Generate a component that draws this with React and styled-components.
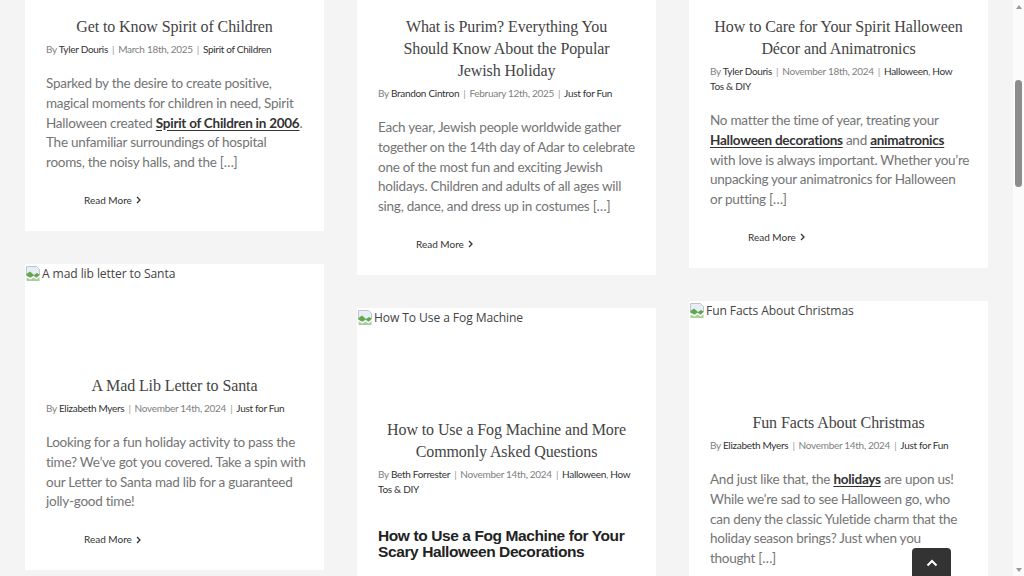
import styled, { createGlobalStyle } from "styled-components";
import { Fragment } from "react";

const GlobalStyle = createGlobalStyle`
  html, body {
    margin: 0;
    padding: 0;
    background: #f4f4f4;
    overflow: hidden;
  }
  body {
    font-family: "Lato", "Liberation Sans", sans-serif;
  }
`;

const Page = styled.div`
  display: flex;
  width: 1024px;
  height: 576px;
  overflow: hidden;
  background: #f4f4f4;
`;

const Main = styled.main`
  flex: 1;
  min-width: 0;
  overflow: hidden;
`;

/* the page is scrolled down a little: the top row of images sits above the fold */
const Masonry = styled.div`
  display: grid;
  grid-template-columns: repeat(3, minmax(0, 1fr));
  column-gap: 33px;
  align-items: start;
  padding: 0 25px;
  margin-top: -95px;
`;

const Column = styled.div`
  display: flex;
  flex-direction: column;
  gap: 33px;
  min-width: 0;
`;

const Card = styled.article`
  background: #fff;
  padding-bottom: 23px;
`;

const ImageSlot = styled.div`
  height: 90px;
  display: flex;
  align-items: flex-start;
  padding-top: 1px;
  font-family: "Open Sans", "Liberation Sans", sans-serif;
  font-size: 12.1px;
  line-height: 18px;
  color: #444;
  letter-spacing: -0.1px;
`;

const Content = styled.div`
  padding: 0 21px;
`;

const Title = styled.h2`
  margin: 20px 0 0;
  font-family: "Liberation Serif", "DejaVu Serif", serif;
  font-weight: 400;
  font-size: 16px;
  line-height: 22px;
  letter-spacing: -0.1px;
  color: #444;
  text-align: center;
`;

const Meta = styled.p`
  margin: 4px 0 0;
  font-size: 10px;
  line-height: 15px;
  letter-spacing: -0.3px;
  color: #808080;

  a {
    color: #333;
    text-decoration: none;
  }
`;

const Sep = styled.span`
  margin: 0 4px;
  color: #999;
`;

const Excerpt = styled.div`
  margin-top: 17px;
  font-size: 13.5px;
  line-height: 19.8px;
  letter-spacing: -0.25px;
  color: #747474;

  a {
    color: #333;
    font-weight: 700;
    text-decoration: underline;
    text-underline-offset: 2px;
  }
`;

/* lines are kept as the source site broke them */
const Line = styled.span`
  display: block;
  white-space: nowrap;
`;

const ExcerptHeading = styled.h3`
  margin: 31px 0 0;
  font-family: "Liberation Sans", Arial, sans-serif;
  font-weight: 700;
  font-size: 15.5px;
  line-height: 16px;
  letter-spacing: -0.4px;
  color: #222;
`;

const ReadMore = styled.a`
  display: inline-flex;
  align-items: center;
  gap: 4px;
  margin: 20px 0 0 38px;
  font-size: 10px;
  line-height: 15px;
  color: #333;
  text-decoration: none;
`;

const Scrollbar = styled.div`
  width: 11px;
  flex: none;
  background: #fbfbfb;
  display: flex;
  flex-direction: column;
  align-items: center;
  padding: 5px 0 4px;
  box-sizing: border-box;
`;

const Arrow = styled.div`
  width: 0;
  height: 0;
  border-left: 3.5px solid transparent;
  border-right: 3.5px solid transparent;
  ${({ $down }) =>
    $down
      ? "border-top: 4px solid #9a9a9a; margin-top: auto;"
      : "border-bottom: 4px solid #9a9a9a;"}
`;

const Thumb = styled.div`
  width: 7px;
  height: 107px;
  margin-top: 71px;
  border-radius: 4px;
  background: #8c8c8c;
`;

const ToTop = styled.a`
  position: fixed;
  left: 912px;
  bottom: -8px;
  width: 39px;
  height: 36px;
  background: #333;
  border-radius: 4px 4px 0 0;
  display: flex;
  justify-content: center;
  padding-top: 11px;
  box-sizing: border-box;
`;

function BrokenImage({ alt }) {
  return (
    <>
      <svg width="17" height="16" viewBox="0 0 17 16" style={{ flex: "none" }}>
        <path d="M1.5 1.5h10l3 3v5.5l-3 2.5-3-2-3 2-4-2z" fill="#e8eef5" stroke="#b7bec6" strokeWidth="0.9" />
        <path d="M1.5 9l3.5-2.5 4 3.5 3-2 2.5 1.5v0.5l-3 2.5-3-2-3 2-4-2z" fill="#62a848" />
        <path d="M1.5 12.5l4 2 3-2 3 2 3-2.5v4H1.5z" fill="#62a848" opacity="0.55" />
      </svg>
      <span>{alt}</span>
    </>
  );
}

function Chevron() {
  return (
    <svg width="5" height="8" viewBox="0 0 5 8">
      <path d="M1 1l3 3-3 3" fill="none" stroke="#333" strokeWidth="1.3" />
    </svg>
  );
}

function PostCard({ post }) {
  return (
    <Card>
      <ImageSlot>
        <BrokenImage alt={post.alt} />
      </ImageSlot>
      <Content>
        <Title>
          {post.title.map((t, i) => (
            <Fragment key={i}>
              {i > 0 && <br />}
              {t}
            </Fragment>
          ))}
        </Title>
        <Meta>
          By <a href="#">{post.author}</a>
          <Sep>|</Sep>
          {post.date}
          <Sep>|</Sep>
          {post.cats.map((c, i) => (
            <span key={c}>
              {i > 0 && ", "}
              <a href="#">{c}</a>
            </span>
          ))}
        </Meta>
        {post.lines && (
          <Excerpt>
            {post.lines.map((l, i) => (
              <Line key={i}>{l}</Line>
            ))}
          </Excerpt>
        )}
        {post.heading && <ExcerptHeading>{post.heading}</ExcerptHeading>}
        {!post.heading && (
          <ReadMore href="#">
            Read More <Chevron />
          </ReadMore>
        )}
      </Content>
    </Card>
  );
}

const columns = [
  [
    {
      alt: "Spirit of Children",
      title: ["Get to Know Spirit of Children"],
      author: "Tyler Douris",
      date: "March 18th, 2025",
      cats: ["Spirit of Children"],
      lines: [
        "Sparked by the desire to create positive,",
        "magical moments for children in need, Spirit",
        <>
          Halloween created <a href="#">Spirit of Children in 2006</a>.
        </>,
        "The unfamiliar surroundings of hospital",
        "rooms, the noisy halls, and the […]",
      ],
    },
    {
      alt: "A mad lib letter to Santa",
      title: ["A Mad Lib Letter to Santa"],
      author: "Elizabeth Myers",
      date: "November 14th, 2024",
      cats: ["Just for Fun"],
      lines: [
        "Looking for a fun holiday activity to pass the",
        "time? We’ve got you covered. Take a spin with",
        "our Letter to Santa mad lib for a guaranteed",
        "jolly-good time!",
      ],
    },
  ],
  [
    {
      alt: "Purim",
      title: ["What is Purim? Everything You", "Should Know About the Popular", "Jewish Holiday"],
      author: "Brandon Cintron",
      date: "February 12th, 2025",
      cats: ["Just for Fun"],
      lines: [
        "Each year, Jewish people worldwide gather",
        "together on the 14th day of Adar to celebrate",
        "one of the most fun and exciting Jewish",
        "holidays. Children and adults of all ages will",
        "sing, dance, and dress up in costumes […]",
      ],
    },
    {
      alt: "How To Use a Fog Machine",
      title: ["How to Use a Fog Machine and More", "Commonly Asked Questions"],
      author: "Beth Forrester",
      date: "November 14th, 2024",
      cats: ["Halloween", "How Tos & DIY"],
      heading: "How to Use a Fog Machine for Your Scary Halloween Decorations",
    },
  ],
  [
    {
      alt: "Animatronics",
      title: ["How to Care for Your Spirit Halloween", "Décor and Animatronics"],
      author: "Tyler Douris",
      date: "November 18th, 2024",
      cats: ["Halloween", "How Tos & DIY"],
      lines: [
        "No matter the time of year, treating your",
        <>
          <a href="#">Halloween decorations</a> and <a href="#">animatronics</a>
        </>,
        "with love is always important. Whether you’re",
        "unpacking your animatronics for Halloween",
        "or putting […]",
      ],
    },
    {
      alt: "Fun Facts About Christmas",
      title: ["Fun Facts About Christmas"],
      author: "Elizabeth Myers",
      date: "November 14th, 2024",
      cats: ["Just for Fun"],
      lines: [
        <>
          And just like that, the <a href="#">holidays</a> are upon us!
        </>,
        "While we’re sad to see Halloween go, who",
        "can deny the classic Yuletide charm that the",
        "holiday season brings? Just when you",
        "thought […]",
      ],
    },
  ],
];

export default function App() {
  return (
    <>
      <GlobalStyle />
      <Page>
        <Main>
          <Masonry>
            {columns.map((col, i) => (
              <Column key={i}>
                {col.map((post) => (
                  <PostCard key={post.alt} post={post} />
                ))}
              </Column>
            ))}
          </Masonry>
        </Main>
        <Scrollbar>
          <Arrow />
          <Thumb />
          <Arrow $down />
        </Scrollbar>
      </Page>
      <ToTop href="#" aria-label="Go to Top">
        <svg width="12" height="8" viewBox="0 0 12 8">
          <path d="M1.5 6.5L6 2l4.5 4.5" fill="none" stroke="#fff" strokeWidth="2" />
        </svg>
      </ToTop>
    </>
  );
}
